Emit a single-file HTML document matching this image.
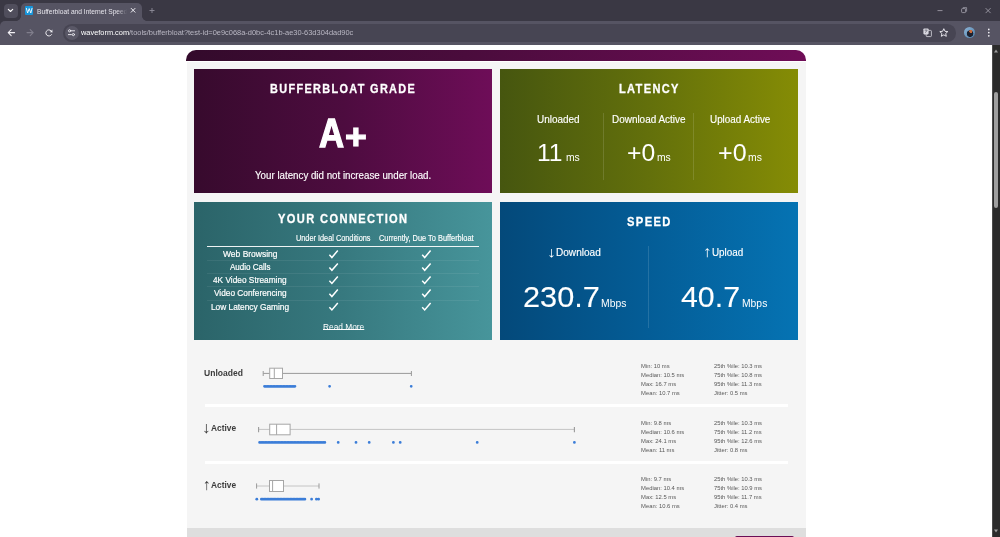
<!DOCTYPE html>
<html lang="en">
<head>
<meta charset="utf-8">
<title>Bufferbloat and Internet Speed Test - Waveform</title>
<style>
*{box-sizing:border-box}
html,body{margin:0;padding:0}
body{width:1000px;height:537px;overflow:hidden;position:relative;background:#fff;font-family:"Liberation Sans",sans-serif;}
.abs{position:absolute}
.t{position:absolute;white-space:nowrap;line-height:1;transform-origin:0 100%;display:block}
/* ---------- browser chrome ---------- */
#tabstrip{left:0;top:0;width:1000px;height:30px;background:#3a3844}
#tabsearch{left:3.5px;top:3.5px;width:14px;height:14px;border-radius:4px;background:#504e5c}
#tab{left:21px;top:3px;width:121px;height:19px;border-radius:5px 5px 0 0;background:#565463}
#tab:before,#tab:after{content:"";position:absolute;bottom:1px;width:5px;height:5px;background:radial-gradient(circle at 0 0,transparent 4.6px,#565463 5.2px)}
#tab:before{left:-5px}
#tab:after{right:-5px;transform:scaleX(-1)}
#favicon{left:25px;top:6.3px;width:8.4px;height:8.4px;background:#1696dc;border-radius:1px}
#toolbar{left:0;top:21px;width:1000px;height:23.5px;background:#565463;border-radius:5px 0 0 0}
#omnibox{left:62.8px;top:24.1px;width:893.2px;height:17.5px;border-radius:8.75px;background:#474553}
#chip{left:64.5px;top:25.5px;width:14px;height:14px;border-radius:7px;background:#5a5867}
#avatar{left:964px;top:27px;width:11px;height:11px;border-radius:50%;background:radial-gradient(circle at 62% 40%,#c96a3a 0 1.4px,transparent 1.8px),radial-gradient(circle at 55% 60%,#1d2230 0 3px,transparent 3.6px),linear-gradient(135deg,#8fb6d8,#4d7ea8)}
/* scrollbar */
#sbtrack{left:992.3px;top:44.5px;width:7.7px;height:492.5px;background:#2b2b2b;border-left:.8px solid #4c4c4c}
#sbthumb{left:994px;top:91.5px;width:4.2px;height:116.5px;border-radius:2.1px;background:#9f9f9f}
/* ---------- page ---------- */
#band{left:186.3px;top:50.3px;width:620px;height:10.6px;border-radius:10px 10px 0 0;background:linear-gradient(90deg,#330a2b 0%,#4a0c3c 45%,#6f0d57 100%)}
#wrap{left:186.8px;top:61.6px;width:619.2px;height:476px;background:#f5f5f5}
#foot{left:186.8px;top:528px;width:619.2px;height:10px;background:#dedede}
#btn{left:734.6px;top:535.6px;width:59.6px;height:6px;border-radius:2px 2px 0 0;background:#6a0d55}
.panel{position:absolute}
#p1{left:194px;top:68.5px;width:298.3px;height:124.6px;background:linear-gradient(90deg,#370a2d 0%,#4d0c3f 50%,#6e0d58 100%)}
#p2{left:500px;top:68.5px;width:298.3px;height:124.6px;background:linear-gradient(90deg,#46560f 0%,#63700b 50%,#858c05 100%)}
#p3{left:194px;top:201.7px;width:298.3px;height:138.8px;background:linear-gradient(90deg,#2b6469 0%,#37797f 50%,#47959b 100%)}
#p4{left:500px;top:201.7px;width:298.3px;height:138.8px;background:linear-gradient(90deg,#04497a 0%,#045d97 50%,#0573b3 100%)}
.vdiv{position:absolute;width:1px;background:rgba(255,255,255,.13)}
.hline{position:absolute;height:1px;left:207.2px;width:272px;background:rgba(255,255,255,.07)}
.sep{position:absolute;left:204.8px;width:583px;height:3px;background:#fff}
svg{position:absolute;left:0;top:0;overflow:visible}
</style>
</head>
<body>
<!-- ===== browser chrome ===== -->
<div class="abs" id="tabstrip"></div>
<div class="abs" id="tabsearch"></div>
<div class="abs" id="tab"></div>
<div class="abs" id="favicon"></div>
<div class="abs" id="toolbar"></div>
<div class="abs" id="omnibox"></div>
<div class="abs" id="chip"></div>
<div class="abs" id="avatar"></div>
<div class="abs" id="sbtrack"></div>
<div class="abs" id="sbthumb"></div>

<!-- ===== page ===== -->
<div class="abs" id="band"></div>
<div class="abs" id="wrap"></div>
<div class="abs" id="foot"></div>
<div class="abs" id="btn"></div>
<div class="panel" id="p1"></div>
<div class="panel" id="p2"></div>
<div class="panel" id="p3"></div>
<div class="panel" id="p4"></div>

<div class="vdiv" style="left:603px;top:113.3px;height:67px"></div>
<div class="vdiv" style="left:693px;top:113.3px;height:67px"></div>
<div class="vdiv" style="left:648px;top:246.2px;height:81.5px"></div>

<div class="hline" style="top:245.9px;height:1.1px;background:#fff;opacity:.92"></div>
<div class="hline" style="top:260.2px"></div>
<div class="hline" style="top:273.3px"></div>
<div class="hline" style="top:286.4px"></div>
<div class="hline" style="top:299.5px"></div>

<div class="sep" style="top:404.4px"></div>
<div class="sep" style="top:460.9px"></div>

<!-- icons + charts -->
<svg width="1000" height="537" viewBox="0 0 1000 537">
  <!-- tab search chevron -->
  <path d="M8.3 9.3 L10.5 11.5 L12.7 9.3" fill="none" stroke="#fff" stroke-width="1.1" stroke-linecap="round" stroke-linejoin="round"/>
  <!-- favicon W -->
  <path d="M26.3 8 L27.6 13 L29.2 8.6 L30.8 13 L32.1 8" fill="none" stroke="#fff" stroke-width=".9" stroke-linejoin="round"/>
  <!-- tab close -->
  <path d="M131.2 8.4 L135 12.2 M135 8.4 L131.2 12.2" stroke="#f0eff4" stroke-width="1" stroke-linecap="round"/>
  <!-- new tab + -->
  <path d="M149.5 10.5 H154.5 M152 8 V13" stroke="#8f8d9a" stroke-width=".9"/>
  <!-- window controls -->
  <path d="M937.5 10.6 H942.5" stroke="#a9a7b3" stroke-width=".8"/>
  <rect x="961.6" y="8.6" width="4" height="4" rx=".8" fill="none" stroke="#a9a7b3" stroke-width=".8"/>
  <path d="M962.8 7.6 H966.6 V11.6" fill="none" stroke="#a9a7b3" stroke-width=".7"/>
  <path d="M985.6 8.1 L990.6 13.1 M990.6 8.1 L985.6 13.1" stroke="#a9a7b3" stroke-width=".8"/>
  <!-- back -->
  <path d="M14.6 32.6 H8.2 M11.2 29.6 L8.2 32.6 L11.2 35.6" fill="none" stroke="#f2f1f6" stroke-width="1.05" stroke-linecap="round" stroke-linejoin="round"/>
  <!-- forward (disabled) -->
  <path d="M27 32.6 H33.2 M30.2 29.6 L33.2 32.6 L30.2 35.6" fill="none" stroke="#807e8c" stroke-width="1.05" stroke-linecap="round" stroke-linejoin="round"/>
  <!-- reload -->
  <path d="M51.9 31.9 A3.1 3.1 0 1 0 51.6 34.6" fill="none" stroke="#f2f1f6" stroke-width=".95" stroke-linecap="round"/>
  <path d="M52.4 29.6 V32.2 H49.8 Z" fill="#f2f1f6"/>
  <!-- site info (tune) icon -->
  <g stroke="#f2f1f6" stroke-width=".9" fill="none" stroke-linecap="round">
    <path d="M71.4 30.8 H74.6 M68.4 34.6 H71.4"/>
    <circle cx="69.6" cy="30.8" r="1.1"/><circle cx="73.4" cy="34.6" r="1.1"/>
  </g>
  <!-- translate icon -->
  <g>
    <rect x="923.4" y="28.4" width="5.2" height="6" rx=".8" fill="#d9d8e0"/>
    <rect x="926.2" y="30.4" width="5.2" height="6.2" rx=".8" fill="none" stroke="#d9d8e0" stroke-width=".8"/>
    <path d="M924.6 30.2 H927.4 M926 29.6 V30.2 M925 32.6 Q926.6 31.8 927 30.4" stroke="#4a4856" stroke-width=".6" fill="none"/>
  </g>
  <!-- star -->
  <path d="M943.8 28.7 L945 31.3 L947.8 31.6 L945.7 33.5 L946.3 36.3 L943.8 34.9 L941.3 36.3 L941.9 33.5 L939.8 31.6 L942.6 31.3 Z" fill="none" stroke="#f2f1f6" stroke-width=".9" stroke-linejoin="round"/>
  <!-- kebab -->
  <g fill="#f2f1f6"><circle cx="988.8" cy="29.4" r=".85"/><circle cx="988.8" cy="32.6" r=".85"/><circle cx="988.8" cy="35.8" r=".85"/></g>
  <!-- scrollbar arrows -->
  <path d="M994 52.4 L996 49.4 L998 52.4 Z" fill="#9d9d9d"/>
  <path d="M994 529.4 L996 532.4 L998 529.4 Z" fill="#9d9d9d"/>

  <!-- check marks -->
  <g fill="none" stroke="#fff" stroke-width="1.5" stroke-linecap="butt" stroke-linejoin="miter" id="checks">
    <path id="ck" d="M-4.2 .6 L-1.7 3.3 L4.2 -3.6" transform="translate(333.6 254.2)"/>
    <path d="M-4.2 .6 L-1.7 3.3 L4.2 -3.6" transform="translate(426.4 254.2)"/>
    <path d="M-4.2 .6 L-1.7 3.3 L4.2 -3.6" transform="translate(333.6 267)"/>
    <path d="M-4.2 .6 L-1.7 3.3 L4.2 -3.6" transform="translate(426.4 267)"/>
    <path d="M-4.2 .6 L-1.7 3.3 L4.2 -3.6" transform="translate(333.6 280.1)"/>
    <path d="M-4.2 .6 L-1.7 3.3 L4.2 -3.6" transform="translate(426.4 280.1)"/>
    <path d="M-4.2 .6 L-1.7 3.3 L4.2 -3.6" transform="translate(333.6 293.2)"/>
    <path d="M-4.2 .6 L-1.7 3.3 L4.2 -3.6" transform="translate(426.4 293.2)"/>
    <path d="M-4.2 .6 L-1.7 3.3 L4.2 -3.6" transform="translate(333.6 306.6)"/>
    <path d="M-4.2 .6 L-1.7 3.3 L4.2 -3.6" transform="translate(426.4 306.6)"/>
  </g>

  <!-- box plot 1: Unloaded -->
  <g fill="none" stroke="#9a9a9a" stroke-width="1">
    <path d="M263.2 373.4 H411.4 M263.2 371 V376 M411.4 371 V376"/>
    <rect x="269.7" y="368.2" width="12.8" height="10.3" fill="#fff" stroke="#a6a6a6"/>
    <path d="M274.3 368.2 V378.5" stroke="#a6a6a6"/>
  </g>
  <g stroke="#3b7dd8" stroke-width="2.8" stroke-linecap="round" fill="#3b7dd8">
    <path d="M264.5 386.3 H296" stroke-dasharray="0 1.45"/>
    <path d="M329.6 386.3 h0 M411.2 386.3 h0"/>
  </g>
  <!-- box plot 2: download active -->
  <g fill="none" stroke="#c4c4c4" stroke-width="1">
    <path d="M258.6 429.4 H574.4 M258.6 427 V432.2 M574.4 427 V432.2"/>
    <path d="M258.6 427 V432.2 M574.4 427 V432.2" stroke="#9a9a9a"/>
    <rect x="269.7" y="424.2" width="20.4" height="10.6" fill="#fff" stroke="#a6a6a6"/>
    <path d="M276.6 424.2 V434.8" stroke="#a6a6a6"/>
  </g>
  <g stroke="#3b7dd8" stroke-width="2.8" stroke-linecap="round">
    <path d="M259.6 442.4 H325" stroke-dasharray="0 1.45"/>
    <path d="M338.2 442.4 h0 M356 442.4 h0 M369.2 442.4 h0 M393.4 442.4 h0 M400.2 442.4 h0 M477.2 442.4 h0 M574.4 442.4 h0"/>
  </g>
  <!-- box plot 3: upload active -->
  <g fill="none" stroke="#c4c4c4" stroke-width="1">
    <path d="M256.6 486 H319"/>
    <path d="M256.6 483.4 V488.6 M319 483.4 V488.6" stroke="#9a9a9a"/>
    <rect x="269.5" y="480.5" width="14" height="11" fill="#fff" stroke="#a6a6a6"/>
    <path d="M272.6 480.5 V491.5" stroke="#a6a6a6"/>
  </g>
  <g stroke="#3b7dd8" stroke-width="2.8" stroke-linecap="round">
    <path d="M256.8 499.2 h0"/>
    <path d="M261.4 499.2 H305" stroke-dasharray="0 1.45"/>
    <path d="M311.6 499.2 h0 M316.4 499.2 h0 M318.6 499.2 h0"/>
  </g>
</svg>

<!-- ===== text ===== -->
<div id="texts" style="position:absolute;left:0;top:0;width:1000px;height:537px;will-change:transform">
<span class="t" id="tabtitle" style="left:36.76px;top:8.85px;font-size:7.1px;font-weight:400;color:#e6e5ec;transform:scaleX(0.9372);-webkit-mask-image:linear-gradient(90deg,#000 88%,transparent 99%);mask-image:linear-gradient(90deg,#000 88%,transparent 99%)">Bufferbloat and Internet Speed</span>
<span class="t" id="url1" style="left:81.41px;top:28.65px;font-size:7.5px;font-weight:400;color:#ffffff;transform:scaleX(0.9864);">waveform.com</span>
<span class="t" id="url2" style="left:129.14px;top:28.65px;font-size:7.5px;font-weight:400;color:#b9b7c3;transform:scaleX(0.9923);">/tools/bufferbloat?test-id=0e9c068a-d0bc-4c1b-ae30-63d304dad90c</span>
<span class="t" id="p1title" style="left:269.72px;top:82.40px;font-size:13.0px;font-weight:700;color:#fff;transform:scaleX(0.8387);letter-spacing:1.6px;-webkit-text-stroke:.3px #fff">BUFFERBLOAT GRADE</span>
<span class="t" id="p1grade" style="left:319.13px;top:112.79px;font-size:40.0px;font-weight:700;color:#fff;transform:scaleX(0.8686);-webkit-text-stroke:1.3px #fff">A</span>
<span class="t" id="p1plus" style="left:344.97px;top:113.83px;font-size:40.0px;font-weight:700;color:#fff;transform:scale(0.9330,0.8797);-webkit-text-stroke:1.3px #fff">+</span>
<span class="t" id="p1sub" style="left:254.76px;top:170.11px;font-size:10.5px;font-weight:400;color:#fff;transform:scaleX(0.9277);-webkit-text-stroke:.15px #fff">Your latency did not increase under load.</span>
<span class="t" id="p2title" style="left:619.04px;top:82.40px;font-size:13.0px;font-weight:700;color:#fff;transform:scaleX(0.8493);letter-spacing:1.6px;-webkit-text-stroke:.3px #fff">LATENCY</span>
<span class="t" id="l1" style="left:536.56px;top:115.42px;font-size:10.3px;font-weight:400;color:#fff;transform:scaleX(0.9673);-webkit-text-stroke:.15px #fff">Unloaded</span>
<span class="t" id="l2" style="left:611.91px;top:114.81px;font-size:10.3px;font-weight:400;color:#fff;transform:scaleX(0.9651);-webkit-text-stroke:.15px #fff">Download Active</span>
<span class="t" id="l3" style="left:709.90px;top:115.39px;font-size:10.3px;font-weight:400;color:#fff;transform:scaleX(0.9585);-webkit-text-stroke:.15px #fff">Upload Active</span>
<span class="t" id="v1" style="left:537.03px;top:141.56px;font-size:23.2px;font-weight:400;color:#fff;transform:scaleX(1.0627);">11</span>
<span class="t" id="v1u" style="left:566.38px;top:153.14px;font-size:10.3px;font-weight:400;color:#fff;transform:scaleX(1.0028);">ms</span>
<span class="t" id="v2" style="left:627.20px;top:141.56px;font-size:23.2px;font-weight:400;color:#fff;transform:scaleX(1.0662);">+0</span>
<span class="t" id="v2u" style="left:656.85px;top:153.10px;font-size:10.3px;font-weight:400;color:#fff;transform:scaleX(1.0051);">ms</span>
<span class="t" id="v3" style="left:717.51px;top:141.56px;font-size:23.2px;font-weight:400;color:#fff;transform:scaleX(1.0811);">+0</span>
<span class="t" id="v3u" style="left:748.01px;top:153.17px;font-size:10.3px;font-weight:400;color:#fff;transform:scaleX(1.0061);">ms</span>
<span class="t" id="p3title" style="left:278.10px;top:212.56px;font-size:12.8px;font-weight:700;color:#fff;transform:scaleX(0.8669);letter-spacing:1.6px;-webkit-text-stroke:.3px #fff">YOUR CONNECTION</span>
<span class="t" id="h1" style="left:295.91px;top:233.65px;font-size:8.8px;font-weight:400;color:#fff;transform:scaleX(0.8329);-webkit-text-stroke:.15px #fff">Under Ideal Conditions</span>
<span class="t" id="h2" style="left:378.82px;top:233.65px;font-size:8.8px;font-weight:400;color:#fff;transform:scaleX(0.8417);-webkit-text-stroke:.15px #fff">Currently, Due To Bufferbloat</span>
<span class="t" id="r0" style="left:222.81px;top:249.84px;font-size:9.3px;font-weight:400;color:#fff;transform:scaleX(0.9117);-webkit-text-stroke:.2px #fff">Web Browsing</span>
<span class="t" id="r1" style="left:229.82px;top:262.98px;font-size:9.3px;font-weight:400;color:#fff;transform:scaleX(0.8635);-webkit-text-stroke:.2px #fff">Audio Calls</span>
<span class="t" id="r2" style="left:213.00px;top:276.13px;font-size:9.3px;font-weight:400;color:#fff;transform:scaleX(0.8930);-webkit-text-stroke:.2px #fff">4K Video Streaming</span>
<span class="t" id="r3" style="left:213.90px;top:289.30px;font-size:9.3px;font-weight:400;color:#fff;transform:scaleX(0.8907);-webkit-text-stroke:.2px #fff">Video Conferencing</span>
<span class="t" id="r4" style="left:210.92px;top:303.02px;font-size:9.3px;font-weight:400;color:#fff;transform:scaleX(0.8939);-webkit-text-stroke:.2px #fff">Low Latency Gaming</span>
<span class="t" id="readmore" style="left:322.78px;top:322.65px;font-size:9.3px;font-weight:400;color:#fff;transform:scaleX(0.8971);text-decoration:underline;text-decoration-thickness:.8px;text-underline-offset:-.5px;text-decoration-skip-ink:none">Read More</span>
<span class="t" id="p4title" style="left:626.75px;top:214.90px;font-size:13.0px;font-weight:700;color:#fff;transform:scaleX(0.8608);letter-spacing:1.6px;-webkit-text-stroke:.3px #fff">SPEED</span>
<span class="t" id="s1a" style="left:546.77px;top:248.72px;font-size:11px;font-weight:400;color:#fff;transform:scale(1.6366,1.3205);font-family:"DejaVu Sans","Liberation Sans",sans-serif;">↓</span>
<span class="t" id="s1" style="left:555.62px;top:246.54px;font-size:10.7px;font-weight:400;color:#fff;transform:scaleX(0.9418);-webkit-text-stroke:.15px #fff">Download</span>
<span class="t" id="s2a" style="left:702.95px;top:249.28px;font-size:11px;font-weight:400;color:#fff;transform:scale(1.6237,1.3955);font-family:"DejaVu Sans","Liberation Sans",sans-serif;">↑</span>
<span class="t" id="s2" style="left:711.75px;top:246.54px;font-size:10.7px;font-weight:400;color:#fff;transform:scaleX(0.9218);-webkit-text-stroke:.15px #fff">Upload</span>
<span class="t" id="sv1" style="left:522.78px;top:282.68px;font-size:29.2px;font-weight:400;color:#fff;transform:scaleX(1.0517);-webkit-text-stroke:.1px #fff">230.7</span>
<span class="t" id="sv1u" style="left:601.09px;top:297.56px;font-size:10.8px;font-weight:400;color:#fff;transform:scaleX(0.9609);">Mbps</span>
<span class="t" id="sv2" style="left:681.03px;top:282.68px;font-size:29.2px;font-weight:400;color:#fff;transform:scaleX(1.0384);-webkit-text-stroke:.1px #fff">40.7</span>
<span class="t" id="sv2u" style="left:741.94px;top:297.56px;font-size:10.8px;font-weight:400;color:#fff;transform:scaleX(0.9583);">Mbps</span>
<span class="t" id="b1" style="left:204.41px;top:368.17px;font-size:9.6px;font-weight:700;color:#3c3c3c;transform:scaleX(0.8901);">Unloaded</span>
<span class="t" id="b2a" style="left:202.39px;top:425.19px;font-size:11px;font-weight:700;color:#3c3c3c;transform:scale(1.6703,1.4349);font-family:"DejaVu Sans","Liberation Sans",sans-serif;">↓</span>
<span class="t" id="b2" style="left:211.10px;top:422.87px;font-size:9.6px;font-weight:700;color:#3c3c3c;transform:scaleX(0.8703);">Active</span>
<span class="t" id="b3a" style="left:203.04px;top:481.93px;font-size:11px;font-weight:700;color:#3c3c3c;transform:scale(1.4460,1.4176);font-family:"DejaVu Sans","Liberation Sans",sans-serif;">↑</span>
<span class="t" id="b3" style="left:210.90px;top:479.67px;font-size:9.6px;font-weight:700;color:#3c3c3c;transform:scaleX(0.8700);">Active</span>
<span class="t" id="st0_0a" style="left:641.40px;top:362.71px;font-size:6.25px;font-weight:400;color:#585858;transform:scaleX(0.9370);">Min: 10 ms</span>
<span class="t" id="st0_0b" style="left:713.80px;top:362.71px;font-size:6.25px;font-weight:400;color:#585858;transform:scaleX(0.9340);">25th %ile: 10.3 ms</span>
<span class="t" id="st0_1a" style="left:641.40px;top:371.71px;font-size:6.25px;font-weight:400;color:#585858;transform:scaleX(0.9370);">Median: 10.5 ms</span>
<span class="t" id="st0_1b" style="left:713.58px;top:371.71px;font-size:6.25px;font-weight:400;color:#585858;transform:scaleX(0.9340);">75th %ile: 10.8 ms</span>
<span class="t" id="st0_2a" style="left:641.40px;top:380.71px;font-size:6.25px;font-weight:400;color:#585858;transform:scaleX(0.9370);">Max: 16.7 ms</span>
<span class="t" id="st0_2b" style="left:713.71px;top:380.71px;font-size:6.25px;font-weight:400;color:#585858;transform:scaleX(0.9340);">95th %ile: 11.3 ms</span>
<span class="t" id="st0_3a" style="left:641.40px;top:389.71px;font-size:6.25px;font-weight:400;color:#585858;transform:scaleX(0.9370);">Mean: 10.7 ms</span>
<span class="t" id="st0_3b" style="left:713.62px;top:389.71px;font-size:6.25px;font-weight:400;color:#585858;transform:scaleX(0.9340);">Jitter: 0.5 ms</span>
<span class="t" id="st1_0a" style="left:641.40px;top:420.16px;font-size:6.25px;font-weight:400;color:#585858;transform:scaleX(0.9370);">Min: 9.8 ms</span>
<span class="t" id="st1_0b" style="left:713.84px;top:420.13px;font-size:6.25px;font-weight:400;color:#585858;transform:scaleX(0.9340);">25th %ile: 10.3 ms</span>
<span class="t" id="st1_1a" style="left:641.40px;top:429.18px;font-size:6.25px;font-weight:400;color:#585858;transform:scaleX(0.9370);">Median: 10.6 ms</span>
<span class="t" id="st1_1b" style="left:713.56px;top:429.16px;font-size:6.25px;font-weight:400;color:#585858;transform:scaleX(0.9340);">75th %ile: 11.2 ms</span>
<span class="t" id="st1_2a" style="left:641.40px;top:438.13px;font-size:6.25px;font-weight:400;color:#585858;transform:scaleX(0.9370);">Max: 24.1 ms</span>
<span class="t" id="st1_2b" style="left:713.70px;top:438.18px;font-size:6.25px;font-weight:400;color:#585858;transform:scaleX(0.9340);">95th %ile: 12.6 ms</span>
<span class="t" id="st1_3a" style="left:641.40px;top:447.16px;font-size:6.25px;font-weight:400;color:#585858;transform:scaleX(0.9370);">Mean: 11 ms</span>
<span class="t" id="st1_3b" style="left:713.66px;top:447.13px;font-size:6.25px;font-weight:400;color:#585858;transform:scaleX(0.9340);">Jitter: 0.8 ms</span>
<span class="t" id="st2_0a" style="left:641.40px;top:475.71px;font-size:6.25px;font-weight:400;color:#585858;transform:scaleX(0.9370);">Min: 9.7 ms</span>
<span class="t" id="st2_0b" style="left:713.82px;top:475.71px;font-size:6.25px;font-weight:400;color:#585858;transform:scaleX(0.9340);">25th %ile: 10.3 ms</span>
<span class="t" id="st2_1a" style="left:641.40px;top:484.71px;font-size:6.25px;font-weight:400;color:#585858;transform:scaleX(0.9370);">Median: 10.4 ms</span>
<span class="t" id="st2_1b" style="left:713.55px;top:484.71px;font-size:6.25px;font-weight:400;color:#585858;transform:scaleX(0.9340);">75th %ile: 10.9 ms</span>
<span class="t" id="st2_2a" style="left:641.40px;top:493.71px;font-size:6.25px;font-weight:400;color:#585858;transform:scaleX(0.9370);">Max: 12.5 ms</span>
<span class="t" id="st2_2b" style="left:713.74px;top:493.71px;font-size:6.25px;font-weight:400;color:#585858;transform:scaleX(0.9340);">95th %ile: 11.7 ms</span>
<span class="t" id="st2_3a" style="left:641.40px;top:502.71px;font-size:6.25px;font-weight:400;color:#585858;transform:scaleX(0.9370);">Mean: 10.6 ms</span>
<span class="t" id="st2_3b" style="left:713.63px;top:502.71px;font-size:6.25px;font-weight:400;color:#585858;transform:scaleX(0.9340);">Jitter: 0.4 ms</span>
</div>
</body>
</html>
